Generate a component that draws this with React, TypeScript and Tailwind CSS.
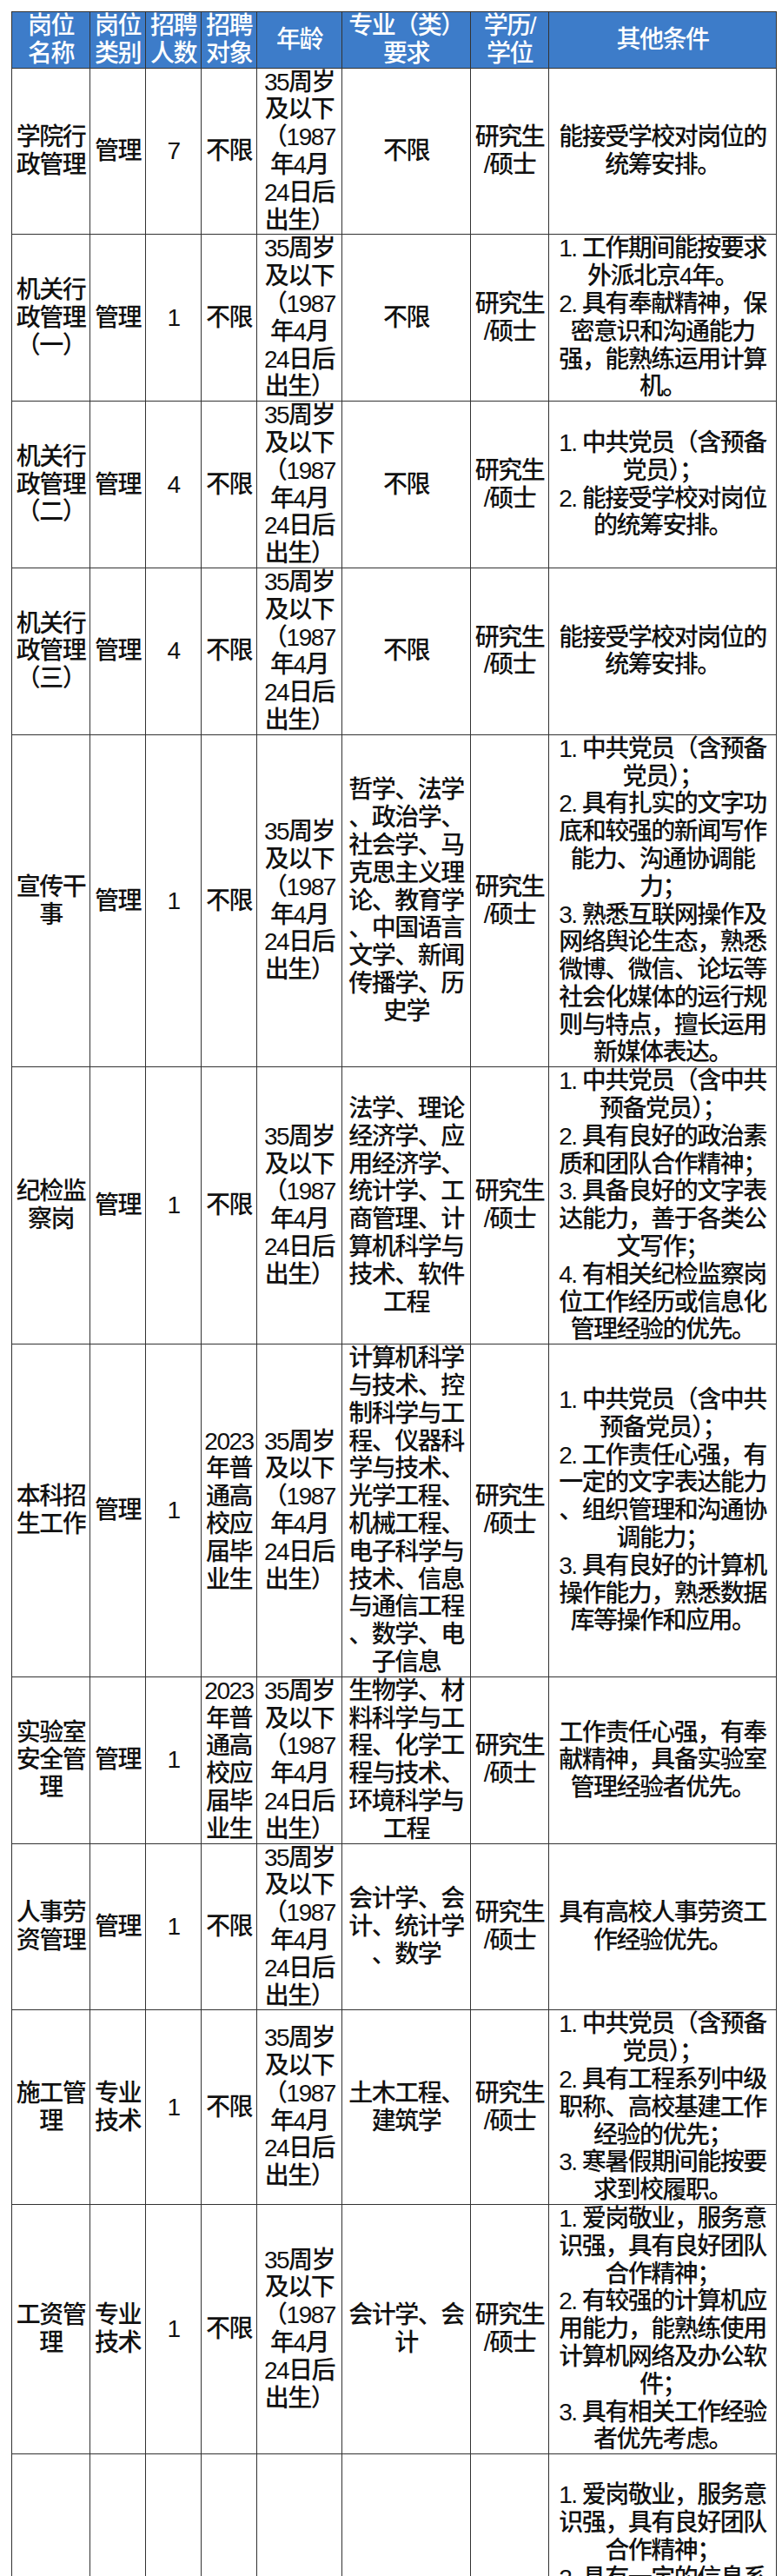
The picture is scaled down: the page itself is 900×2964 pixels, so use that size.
const age = "35周岁\n及以下\n（1987\n年4月\n24日后\n出生）";
const edu = "研究生\n/硕士";
const grad = "2023\n年普\n通高\n校应\n届毕\n业生";

const widths = ["w-[90px]", "w-[64px]", "w-[64px]", "w-[64px]", "w-[98px]", "w-[148px]", "w-[90px]", "w-[262px]"];

const headers = ["岗位\n名称", "岗位\n类别", "招聘\n人数", "招聘\n对象", "年龄", "专业（类）\n要求", "学历/\n学位", "其他条件"];

const rows: string[][] = [
  ["学院行\n政管理", "管理", "7", "不限", age, "不限", edu, "能接受学校对岗位的\n统筹安排。"],
  [
    "机关行\n政管理\n（一）", "管理", "1", "不限", age, "不限", edu,
    "1. 工作期间能按要求\n外派北京4年。\n2. 具有奉献精神，保\n密意识和沟通能力\n强，能熟练运用计算\n机。",
  ],
  [
    "机关行\n政管理\n（二）", "管理", "4", "不限", age, "不限", edu,
    "1. 中共党员（含预备\n党员）；\n2. 能接受学校对岗位\n的统筹安排。",
  ],
  ["机关行\n政管理\n（三）", "管理", "4", "不限", age, "不限", edu, "能接受学校对岗位的\n统筹安排。"],
  [
    "宣传干\n事", "管理", "1", "不限", age,
    "哲学、法学\n、政治学、\n社会学、马\n克思主义理\n论、教育学\n、中国语言\n文学、新闻\n传播学、历\n史学",
    edu,
    "1. 中共党员（含预备\n党员）；\n2. 具有扎实的文字功\n底和较强的新闻写作\n能力、沟通协调能\n力；\n3. 熟悉互联网操作及\n网络舆论生态，熟悉\n微博、微信、论坛等\n社会化媒体的运行规\n则与特点，擅长运用\n新媒体表达。",
  ],
  [
    "纪检监\n察岗", "管理", "1", "不限", age,
    "法学、理论\n经济学、应\n用经济学、\n统计学、工\n商管理、计\n算机科学与\n技术、软件\n工程",
    edu,
    "1. 中共党员（含中共\n预备党员）；\n2. 具有良好的政治素\n质和团队合作精神；\n3. 具备良好的文字表\n达能力，善于各类公\n文写作；\n4. 有相关纪检监察岗\n位工作经历或信息化\n管理经验的优先。",
  ],
  [
    "本科招\n生工作", "管理", "1", grad, age,
    "计算机科学\n与技术、控\n制科学与工\n程、仪器科\n学与技术、\n光学工程、\n机械工程、\n电子科学与\n技术、信息\n与通信工程\n、数学、电\n子信息",
    edu,
    "1. 中共党员（含中共\n预备党员）；\n2. 工作责任心强，有\n一定的文字表达能力\n、组织管理和沟通协\n调能力；\n3. 具有良好的计算机\n操作能力，熟悉数据\n库等操作和应用。",
  ],
  [
    "实验室\n安全管\n理", "管理", "1", grad, age,
    "生物学、材\n料科学与工\n程、化学工\n程与技术、\n环境科学与\n工程",
    edu,
    "工作责任心强，有奉\n献精神，具备实验室\n管理经验者优先。",
  ],
  ["人事劳\n资管理", "管理", "1", "不限", age, "会计学、会\n计、统计学\n、数学", edu, "具有高校人事劳资工\n作经验优先。"],
  [
    "施工管\n理", "专业\n技术", "1", "不限", age, "土木工程、\n建筑学", edu,
    "1. 中共党员（含预备\n党员）；\n2. 具有工程系列中级\n职称、高校基建工作\n经验的优先；\n3. 寒暑假期间能按要\n求到校履职。",
  ],
  [
    "工资管\n理", "专业\n技术", "1", "不限", age, "会计学、会\n计", edu,
    "1. 爱岗敬业，服务意\n识强，具有良好团队\n合作精神；\n2. 有较强的计算机应\n用能力，能熟练使用\n计算机网络及办公软\n件；\n3. 具有相关工作经验\n者优先考虑。",
  ],
];

// last row runs past the bottom of the screenshot
const lastRow = [
  "信息化\n管理", "专业\n技术", "1", "不限", age, "计算机科学\n与技术、软\n件工程", edu,
];
const lastOther =
  "1. 爱岗敬业，服务意\n识强，具有良好团队\n合作精神；\n2. 具有一定的信息系\n统开发与维护能力，\n熟悉数据库管理；\n3. 具有良好的沟通协\n调能力和文字表达\n能力；\n4. 具有相关工作经验\n者优先考虑。";

const cell = "border border-[#333] text-center whitespace-pre p-0";

export default function App() {
  return (
    <div
      className="min-h-screen bg-white pt-[13px] pl-[13px]"
      style={{ fontFamily: '"Liberation Sans", "Noto Sans CJK SC", sans-serif' }}
    >
      <table className="table-fixed border-collapse w-[880px] text-[28px] tracking-[-1.5px] leading-[31.8px] text-[#111] font-medium">
        <colgroup>
          {widths.map((w, i) => (
            <col key={i} className={w} />
          ))}
        </colgroup>
        <thead>
          <tr className="bg-[#3d7cc9] text-white">
            {headers.map((h, i) => (
              <th key={i} className={`${cell} font-medium align-middle`}>
                {h}
              </th>
            ))}
          </tr>
        </thead>
        <tbody>
          {rows.map((r, ri) => (
            <tr key={ri}>
              {r.map((c, ci) => (
                <td key={ci} className={`${cell} align-middle`}>
                  {c}
                </td>
              ))}
            </tr>
          ))}
          <tr className="h-[520px]">
            {lastRow.map((c, ci) => (
              <td key={ci} className={`${cell} align-middle`}>
                {c}
              </td>
            ))}
            <td className={`${cell} align-top pt-[31px]`}>{lastOther}</td>
          </tr>
        </tbody>
      </table>
    </div>
  );
}
